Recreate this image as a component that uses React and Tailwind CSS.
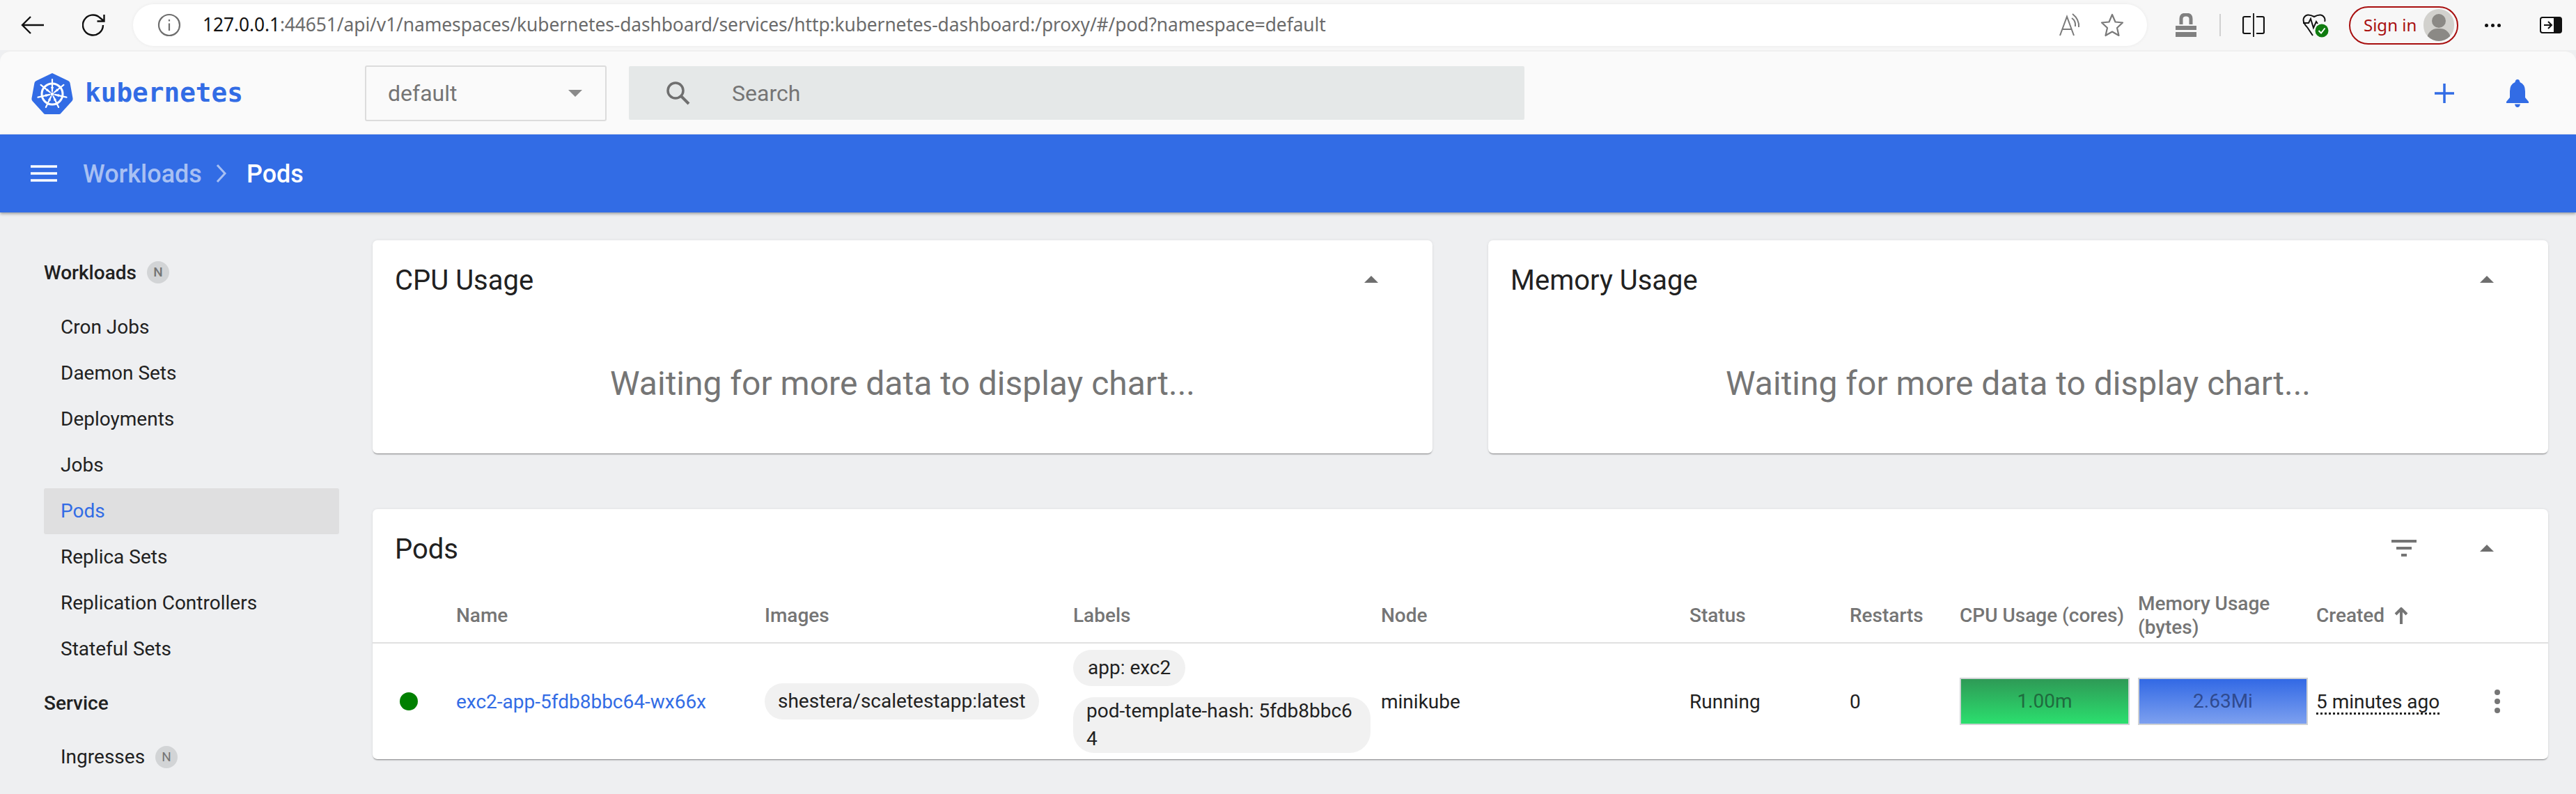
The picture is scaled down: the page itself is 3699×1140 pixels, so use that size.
import React from "react";

const GRID = "grid grid-cols-[120px_443px_443px_442px_443px_230px_158px_256px_256px_233px_100px]";

function Logo() {
  const spokes = [0, 1, 2, 3, 4, 5, 6];
  return (
    <svg width="60" height="60" viewBox="0 0 60 60" className="shrink-0">
      <path d="M30 1 L53 12 Q55 13 55.500 15 L59.500 37 Q60 39 58.500 41 L43 58 Q42 60 40 60 L20 60 Q18 60 17 58 L1.500 41 Q0 39 0.500 37 L4.500 15 Q5 13 7 12 Z" fill="#326ce5" />
      <circle cx="30" cy="31" r="15" fill="none" stroke="#fff" strokeWidth="3" />
      <circle cx="30" cy="31" r="2.500" fill="#fff" />
      {spokes.map((i) => (
        <g key={i} transform={`rotate(${i * 51.43} 30 31)`}>
          <line x1="30" y1="27" x2="30" y2="10" stroke="#fff" strokeWidth="2.200" strokeLinecap="round" />
          <path d="M28 21 L32 21 L30 27 Z" fill="#fff" />
        </g>
      ))}
    </svg>
  );
}

function NavItem({ children, active, badge }) {
  return (
    <div className={`h-[66px] flex items-center pl-6 rounded-[3px] text-[28px] ${active ? "bg-[#dfdfe0] text-[#326ce5]" : "text-[#212121]"}`}>
      <span>{children}</span>
      {badge && <Badge />}
    </div>
  );
}

function Badge() {
  return (
    <span className="ml-[15px] w-8 h-8 rounded-full bg-[#d2d4d6] text-[#757575] text-[19px] flex items-center justify-center">N</span>
  );
}

function Caret() {
  return (
    <svg width="24" height="14" viewBox="0 0 24 14">
      <path d="M12 2 L22 12 L2 12 Z" fill="#6e6e6e" />
    </svg>
  );
}

function ChartCard({ title }) {
  return (
    <div className="flex-1 h-[306px] bg-white rounded-[7px] shadow-[0_2px_2px_-1px_rgba(0,0,0,0.45),0_0_4px_rgba(0,0,0,0.07)] flex flex-col">
      <div className="h-[112px] pl-[32px] pr-[76px] flex items-center justify-between">
        <span className="pt-[3px] text-[40px] text-[#212121]">{title}</span>
        <Caret />
      </div>
      <div className="pt-[64px] text-center text-[48px] leading-[60px] text-[#757575]">Waiting for more data to display chart...</div>
    </div>
  );
}

function Meter({ from, to, text, label }) {
  return (
    <div className="w-[244px] h-[68px] border-2 border-[#cfd2d4] flex items-center justify-center text-[28px]" style={{ background: `linear-gradient(${from}, ${to})`, color: text }}>
      {label}
    </div>
  );
}

const GrayIcon = "#7a7a7a";

function BrowserBar() {
  return (
    <div className="h-[72px] bg-[#f7f7f7] flex items-center">
      <div className="w-[191px] shrink-0 flex items-center">
        <svg width="36" height="30" viewBox="0 0 36 30" className="ml-[29px]">
          <path d="M34 15 H3 M15 3 L3 15 L15 27" fill="none" stroke="#111" strokeWidth="2.400" />
        </svg>
        <svg width="34" height="34" viewBox="0 0 34 34" className="ml-[53px]">
          <path d="M30 17 A14.500 14.500 0 1 1 25.500 6.500 L31 11 M31.500 2 V11.500 H21.500" fill="none" stroke="#111" strokeWidth="2.400" />
        </svg>
      </div>
      <div className="w-[2892px] h-[60px] shrink-0 rounded-full bg-white shadow-[0_0_5px_rgba(0,0,0,0.06)] flex items-center">
        <svg width="34" height="34" viewBox="0 0 34 34" className="ml-[35px]">
          <circle cx="17" cy="17" r="15" fill="none" stroke="#6f6f6f" strokeWidth="2.200" />
          <path d="M17 14.500 V25 M17 9 V11.500" stroke="#6f6f6f" strokeWidth="2.200" />
        </svg>
        <span className="ml-[31px] text-[26.400px] font-['Noto_Sans'] text-[#6b6b6b] whitespace-nowrap tracking-[-0.1px]">
          <span className="text-[#111]">127.0.0.1</span>:44651/api/v1/namespaces/kubernetes-dashboard/services/http:kubernetes-dashboard:/proxy/#/pod?namespace=default
        </span>
        <div className="ml-auto flex items-center">
          <div className="w-[60px] flex justify-center">
            <svg width="36" height="36" viewBox="0 0 36 36">
              <path d="M3 33 L13 6 L23 33 M7 24 H19" fill="none" stroke={GrayIcon} strokeWidth="2" />
              <path d="M21 2 Q31 10 30 21 M20 8 Q26 12 25 20" fill="none" stroke={GrayIcon} strokeWidth="2" />
            </svg>
          </div>
          <div className="w-[60px] mr-[20px] flex justify-center">
            <svg width="34" height="34" viewBox="0 0 34 34">
              <path d="M17 2 L21.500 12.500 L32 13.500 L24 21 L26.500 32 L17 26.500 L7.500 32 L10 21 L2 13.500 L12.500 12.500 Z" fill="none" stroke={GrayIcon} strokeWidth="2.200" strokeLinejoin="round" />
            </svg>
          </div>
        </div>
      </div>
      <div className="w-[112px] shrink-0 flex justify-center">
        <svg width="30" height="34" viewBox="0 0 30 34">
          <path d="M8 16 V8 Q8 2 15 2 Q22 2 22 8 V16" fill="none" stroke="#808080" strokeWidth="5" />
          <rect x="0" y="18" width="30" height="6" fill="#808080" />
          <rect x="0" y="27" width="30" height="7" fill="#808080" />
        </svg>
      </div>
      <div className="w-[2px] h-[32px] bg-[#d0d0d0] shrink-0 -ml-[8px]" />
      <div className="w-[94px] shrink-0 flex justify-center">
        <svg width="32" height="34" viewBox="0 0 32 34">
          <path d="M12 5 H3 Q1 5 1 7 V27 Q1 29 3 29 H12 M20 5 H29 Q31 5 31 7 V27 Q31 29 29 29 H20" fill="none" stroke="#111" strokeWidth="2.200" />
          <path d="M16 0 V34" stroke="#111" strokeWidth="1.800" />
        </svg>
      </div>
      <div className="w-[84px] shrink-0 flex justify-center">
        <svg width="38" height="36" viewBox="0 0 38 36">
          <path d="M7 21 Q0 14 2 8 Q6 0 17 6 Q28 0 32 8 Q33 11 32 13 M1 15 H9 L12 9 L16 22 L20 13 L22 16 M7 21 L15 33" fill="none" stroke="#111" strokeWidth="2" />
          <circle cx="28" cy="26" r="9.500" fill="#107c10" />
          <path d="M23.500 26 L27 29.500 L32.500 22.500" fill="none" stroke="#fff" strokeWidth="2" />
        </svg>
      </div>
      <div className="w-[157px] h-[55px] shrink-0 ml-[6px] rounded-full border-2 border-[#a80f0f] flex items-center pl-[19px] pr-[4px] justify-between">
        <span className="text-[#a80f0f] text-[24px] font-['Noto_Sans'] whitespace-nowrap">Sign in</span>
        <span className="w-[44px] h-[46px] rounded-full bg-[#d2d1cd] overflow-hidden relative">
          <span className="absolute left-[12px] top-[7px] w-[20px] h-[20px] rounded-full bg-[#8b8985]" />
          <span className="absolute left-[5px] top-[28px] w-[34px] h-[30px] rounded-full bg-[#8b8985]" />
        </span>
      </div>
      <div className="w-[98px] shrink-0 flex justify-center gap-[4px]">
        <span className="w-[5px] h-[5px] rounded-full bg-[#111]" />
        <span className="w-[5px] h-[5px] rounded-full bg-[#111]" />
        <span className="w-[5px] h-[5px] rounded-full bg-[#111]" />
      </div>
      <svg width="32" height="24" viewBox="0 0 32 24" className="ml-[19px] shrink-0">
        <rect x="1" y="1" width="30" height="22" rx="3" fill="#fff" stroke="#111" strokeWidth="2" />
        <rect x="20" y="1" width="11" height="22" fill="#111" />
        <path d="M6 12 H16 M12 7 L17 12 L12 17" fill="none" stroke="#111" strokeWidth="2" />
      </svg>
    </div>
  );
}

export default function App() {
  return (
    <div className="w-[3699px] h-[1140px] overflow-hidden bg-[#eeeff1] font-['Roboto',sans-serif]">
      <BrowserBar />
      <div className="h-[121px] bg-[#fafafa] rounded-t-[16px] border-t-2 border-[#efefef] flex items-center">
        <div className="w-[524px] shrink-0 pl-[45px] flex items-center gap-[17px]">
          <Logo />
          <span className="font-['DejaVu_Sans_Mono'] font-bold text-[37.700px] text-[#326ce5]">kubernetes</span>
        </div>
        <div className="w-[347px] h-[80px] shrink-0 rounded-[3px] border-2 border-[#dcdcdc] flex items-center justify-between pl-[31px] pr-[32px] text-[32px] text-[#757575]">
          <span>default</span>
          <svg width="22" height="12" viewBox="0 0 22 12"><path d="M1 1 H21 L11 11 Z" fill="#8a8a8a" /></svg>
        </div>
        <div className="ml-[32px] w-[1286px] h-[77px] shrink-0 rounded-[2px] bg-[#e5e8e8] flex items-center">
          <svg width="36" height="36" viewBox="0 0 36 36" className="ml-[52px]">
            <circle cx="15" cy="14" r="11" fill="none" stroke="#6f6f6f" strokeWidth="3.500" />
            <path d="M23 22 L34 33" stroke="#6f6f6f" strokeWidth="4" />
          </svg>
          <span className="ml-[60px] text-[32px] text-[#757575]">Search</span>
        </div>
        <svg width="30" height="30" viewBox="0 0 30 30" className="ml-auto mr-[73px]">
          <path d="M15 1 V29 M1 15 H29" stroke="#326ce5" strokeWidth="3.500" />
        </svg>
        <svg width="34" height="40" viewBox="0 0 34 40" className="mr-[67px]">
          <path d="M17 0 Q20 0 20.500 4 Q28 7 28 17 V26 L33 32 V34 H1 V32 L6 26 V17 Q6 7 13.500 4 Q14 0 17 0 Z M13 35.500 H21 Q20 40 17 40 Q14 40 13 35.500 Z" fill="#326ce5" />
        </svg>
      </div>
      <div className="h-[112px] bg-[#326ce5] shadow-[0_2px_4px_rgba(0,0,0,0.35)] flex items-center relative">
        <svg width="38" height="24" viewBox="0 0 38 24" className="ml-[44px]">
          <path d="M0 2 H38 M0 12 H38 M0 22 H38" stroke="#fff" strokeWidth="3.500" />
        </svg>
        <span className="ml-[37px] pt-[2px] text-[36px] font-medium text-[#a8c0f3]">Workloads</span>
        <svg width="18" height="28" viewBox="0 0 18 28" className="ml-[19px]">
          <path d="M3 2 L14 14 L3 26" fill="none" stroke="#a8c0f3" strokeWidth="3" />
        </svg>
        <span className="ml-[27px] pt-[2px] text-[36px] font-medium text-white">Pods</span>
      </div>
      <div className="flex">
        <div className="w-[535px] shrink-0 pl-[63px] pr-[48px] pt-[53px]">
          <div className="h-[66px] flex items-center text-[28px] font-medium text-[#212121] mb-[13px]">
            <span className="pt-[2px]">Workloads</span>
            <Badge />
          </div>
          <NavItem>Cron Jobs</NavItem>
          <NavItem>Daemon Sets</NavItem>
          <NavItem>Deployments</NavItem>
          <NavItem>Jobs</NavItem>
          <NavItem active>Pods</NavItem>
          <NavItem>Replica Sets</NavItem>
          <NavItem>Replication Controllers</NavItem>
          <NavItem>Stateful Sets</NavItem>
          <div className="h-[66px] mt-[12px] mb-[11px] flex items-center text-[28px] font-medium text-[#212121]">Service</div>
          <NavItem badge>Ingresses</NavItem>
        </div>
        <div className="flex-1 min-w-0 pr-[40px] pt-[40px]">
          <div className="flex gap-[80px]">
            <ChartCard title="CPU Usage" />
            <ChartCard title="Memory Usage" />
          </div>
          <div className="mt-[80px] h-[359px] bg-white rounded-[7px] shadow-[0_2px_2px_-1px_rgba(0,0,0,0.45),0_0_4px_rgba(0,0,0,0.07)]">
            <div className="h-[112px] pl-[32px] pr-[76px] flex items-center">
              <span className="pt-[3px] text-[40px] text-[#212121]">Pods</span>
              <svg width="36" height="26" viewBox="0 0 36 26" className="ml-auto">
                <path d="M0 3 H36 M7 13 H29 M14 23 H22" stroke="#757575" strokeWidth="4" />
              </svg>
              <div className="ml-[89px] flex"><Caret /></div>
            </div>
            <div className={`${GRID} h-[81px] pt-[2px] items-center text-[28px] leading-[40px] text-[#757575] font-medium border-b-2 border-[#e0e0e0]`}>
              <span />
              <span>Name</span>
              <span>Images</span>
              <span>Labels</span>
              <span>Node</span>
              <span>Status</span>
              <span>Restarts</span>
              <span className="whitespace-nowrap">CPU Usage (cores)</span>
              <span className="leading-[34px] pr-[20px]">Memory Usage (bytes)</span>
              <span className="flex items-center gap-[14px]">Created
                <svg width="20" height="24" viewBox="0 0 20 24"><path d="M10 24 V2 M2 10 L10 2 L18 10" fill="none" stroke="#757575" strokeWidth="4" /></svg>
              </span>
              <span />
            </div>
            <div className={`${GRID} h-[166px] items-center text-[28px] text-[#212121]`}>
              <span className="ml-[39px] w-[26px] h-[26px] rounded-full bg-[#008000]" />
              <span className="pt-[2px] text-[#326ce5]">exc2-app-5fdb8bbc64-wx66x</span>
              <span>
                <span className="inline-block h-[52px] leading-[52px] px-[19px] rounded-full bg-[#f1f1f1] whitespace-nowrap">shestera/scaletestapp:latest</span>
              </span>
              <div className="flex flex-col items-start gap-[16px]">
                <span className="h-[52px] leading-[52px] px-[21px] rounded-full bg-[#f1f1f1]">app: exc2</span>
                <span className="w-[427px] h-[80px] leading-[40px] px-[19px] rounded-[30px] bg-[#f1f1f1] break-all">pod-template-hash: 5fdb8bbc64</span>
              </div>
              <span className="pt-[2px]">minikube</span>
              <span className="pt-[2px]">Running</span>
              <span className="pt-[2px]">0</span>
              <Meter from="#2e9a56" to="#2bdf6e" text="#1f6b3e" label="1.00m" />
              <Meter from="#3269e5" to="#7da0ef" text="#2f4a8f" label="2.63Mi" />
              <span className="pt-[2px] justify-self-start whitespace-nowrap underline decoration-dotted underline-offset-[6px]">5 minutes ago</span>
              <svg width="10" height="36" viewBox="0 0 10 36" className="ml-[22px]">
                <circle cx="5" cy="5" r="4" fill="#757575" />
                <circle cx="5" cy="18" r="4" fill="#757575" />
                <circle cx="5" cy="31" r="4" fill="#757575" />
              </svg>
            </div>
          </div>
        </div>
      </div>
    </div>
  );
}
